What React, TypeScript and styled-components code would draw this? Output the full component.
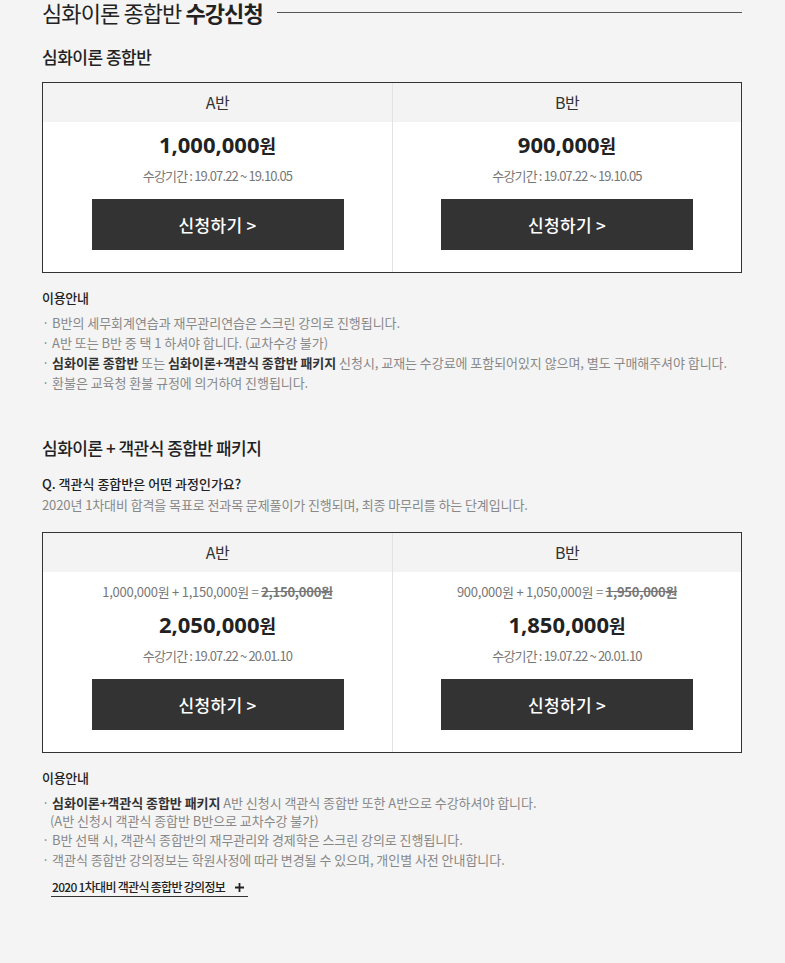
import React from 'react'
import styled, { createGlobalStyle } from 'styled-components'

const GlobalStyle = createGlobalStyle`
  html, body {
    margin: 0;
    padding: 0;
    background: #f4f4f4;
  }
  body {
    font-family: 'Noto Sans CJK KR', 'Noto Sans', sans-serif;
    color: #222;
  }
`

interface IPlan {
  name: string
  price: string
  period: string
  breakdown?: string
  listPrice?: string
}

const basicPlans: IPlan[] = [
  { name: 'A반', price: '1,000,000', period: '수강기간 : 19.07.22 ~ 19.10.05' },
  { name: 'B반', price: '900,000', period: '수강기간 : 19.07.22 ~ 19.10.05' },
]

const packagePlans: IPlan[] = [
  {
    name: 'A반',
    price: '2,050,000',
    period: '수강기간 : 19.07.22 ~ 20.01.10',
    breakdown: '1,000,000원 + 1,150,000원 = ',
    listPrice: '2,150,000원',
  },
  {
    name: 'B반',
    price: '1,850,000',
    period: '수강기간 : 19.07.22 ~ 20.01.10',
    breakdown: '900,000원 + 1,050,000원 = ',
    listPrice: '1,950,000원',
  },
]

const Page = styled.div`
  width: 700px;
  padding: 0 43px 60px 42px;
`

const Heading = styled.h1`
  display: flex;
  align-items: center;
  gap: 14px;
  margin: 0;
  height: 24px;
  font-size: 22px;
  line-height: 24px;
  font-weight: 400;
  letter-spacing: -0.9px;
  color: #222;

  b {
    font-weight: 700;
  }
`

const Rule = styled.span`
  flex: 1;
  height: 1px;
  background: #555;
`

const SectionTitle = styled.h2<{ $top: number }>`
  margin: ${({ $top }) => $top}px 0 0;
  font-size: 17px;
  line-height: 26px;
  font-weight: 500;
  letter-spacing: -0.5px;
  color: #222;
`

const Question = styled.p`
  margin: 13px 0 0;
  font-size: 13px;
  line-height: 20px;
  font-weight: 500;
  letter-spacing: 0;
  color: #222;
`

const Description = styled.p`
  margin: 1px 0 0;
  font-size: 13px;
  line-height: 20px;
  letter-spacing: -0.1px;
  color: #888;
`

const PriceTable = styled.div<{ $top: number }>`
  margin-top: ${({ $top }) => $top}px;
  display: grid;
  grid-template-columns: 1fr 1fr;
  border: 1px solid #333;
  background: #fff;
`

const Column = styled.div`
  display: flex;
  flex-direction: column;

  & + & {
    border-left: 1px solid #e3e3e3;
  }
`

const ColumnHead = styled.div`
  height: 39px;
  line-height: 39px;
  text-align: center;
  background: #f3f3f3;
  font-size: 16px;
  letter-spacing: -0.5px;
  color: #333;
`

const ColumnBody = styled.div`
  display: flex;
  flex-direction: column;
  align-items: center;
  padding: 8px 0 22px;
`

const Breakdown = styled.div`
  margin: 2px 0 8px;
  font-size: 13px;
  line-height: 20px;
  letter-spacing: -0.25px;
  color: #777;

  s {
    font-weight: 700;
  }
`

const Price = styled.div`
  font-family: 'Noto Sans', 'Noto Sans CJK KR', sans-serif;
  font-size: 22px;
  line-height: 28px;
  font-weight: 700;
  color: #222;

  small {
    font-family: 'Noto Sans CJK KR', sans-serif;
    font-size: 18px;
  }
`

const Period = styled.div`
  margin-top: 7px;
  font-size: 13px;
  line-height: 20px;
  letter-spacing: -0.85px;
  color: #777;
`

const ApplyButton = styled.button`
  margin-top: 13px;
  width: 252px;
  height: 51px;
  border: 0;
  background: #333;
  color: #fff;
  font-family: 'Noto Sans CJK KR', sans-serif;
  font-size: 17px;
  font-weight: 500;
  letter-spacing: 0.3px;
  cursor: pointer;
`

const NoticeTitle = styled.div`
  margin-top: 15px;
  font-size: 13px;
  line-height: 20px;
  font-weight: 500;
  letter-spacing: -0.3px;
  color: #222;
`

const NoticeList = styled.ul`
  list-style: none;
  margin: 5px 0 0;
  padding: 0;
`

const NoticeItem = styled.li<{ $wrap?: boolean }>`
  padding-left: 8px;
  text-indent: -8px;
  padding-top: ${({ $wrap }) => ($wrap ? '1px' : '0')};
  font-size: 13px;
  line-height: ${({ $wrap }) => ($wrap ? '18px' : '20px')};
  letter-spacing: -0.05px;
  color: #888;

  &::before {
    content: '· ';
  }

  b {
    font-weight: 700;
    color: #333;
  }
`

const InfoLink = styled.a`
  display: inline-flex;
  align-items: center;
  gap: 10px;
  margin: 8px 0 0 9px;
  padding: 0 4px 0 1px;
  border-bottom: 1px solid #333;
  font-size: 12px;
  line-height: 18px;
  font-weight: 500;
  letter-spacing: -0.7px;
  color: #222;
  text-decoration: none;
  cursor: pointer;
`

function Plus() {
  return (
    <svg width="9" height="9" viewBox="0 0 9 9">
      <path d="M4.5 0v9M0 4.5h9" stroke="#222" strokeWidth="1.8" />
    </svg>
  )
}

function PlanColumn({ plan }: { plan: IPlan }) {
  return (
    <Column>
      <ColumnHead>{plan.name}</ColumnHead>
      <ColumnBody>
        {plan.breakdown && (
          <Breakdown>
            {plan.breakdown}
            <s>{plan.listPrice}</s>
          </Breakdown>
        )}
        <Price>
          {plan.price}
          <small>원</small>
        </Price>
        <Period>{plan.period}</Period>
        <ApplyButton>신청하기 &gt;</ApplyButton>
      </ColumnBody>
    </Column>
  )
}

export default function App() {
  return (
    <>
      <GlobalStyle />
      <Page>
        <Heading>
          <span>
            심화이론 종합반 <b>수강신청</b>
          </span>
          <Rule />
        </Heading>

        <SectionTitle $top={20}>심화이론 종합반</SectionTitle>
        <PriceTable $top={12}>
          {basicPlans.map((plan) => (
            <PlanColumn key={plan.name} plan={plan} />
          ))}
        </PriceTable>

        <NoticeTitle>이용안내</NoticeTitle>
        <NoticeList>
          <NoticeItem>B반의 세무회계연습과 재무관리연습은 스크린 강의로 진행됩니다.</NoticeItem>
          <NoticeItem>A반 또는 B반 중 택 1 하셔야 합니다. (교차수강 불가)</NoticeItem>
          <NoticeItem>
            <b>심화이론 종합반</b> 또는 <b>심화이론+객관식 종합반 패키지</b> 신청시, 교재는
            수강료에 포함되어있지 않으며, 별도 구매해주셔야 합니다.
          </NoticeItem>
          <NoticeItem>환불은 교육청 환불 규정에 의거하여 진행됩니다.</NoticeItem>
        </NoticeList>

        <SectionTitle $top={42}>심화이론 + 객관식 종합반 패키지</SectionTitle>
        <Question>Q. 객관식 종합반은 어떤 과정인가요?</Question>
        <Description>
          2020년 1차대비 합격을 목표로 전과목 문제풀이가 진행되며, 최종 마무리를 하는 단계입니다.
        </Description>
        <PriceTable $top={17}>
          {packagePlans.map((plan) => (
            <PlanColumn key={plan.name} plan={plan} />
          ))}
        </PriceTable>

        <NoticeTitle>이용안내</NoticeTitle>
        <NoticeList>
          <NoticeItem $wrap>
            <b>심화이론+객관식 종합반 패키지</b> A반 신청시 객관식 종합반 또한 A반으로 수강하셔야 합니다.
            <br />
            (A반 신청시 객관식 종합반 B반으로 교차수강 불가)
          </NoticeItem>
          <NoticeItem>B반 선택 시, 객관식 종합반의 재무관리와 경제학은 스크린 강의로 진행됩니다.</NoticeItem>
          <NoticeItem>객관식 종합반 강의정보는 학원사정에 따라 변경될 수 있으며, 개인별 사전 안내합니다.</NoticeItem>
        </NoticeList>
        <InfoLink>
          2020 1차대비 객관식 종합반 강의정보
          <Plus />
        </InfoLink>
      </Page>
    </>
  )
}
